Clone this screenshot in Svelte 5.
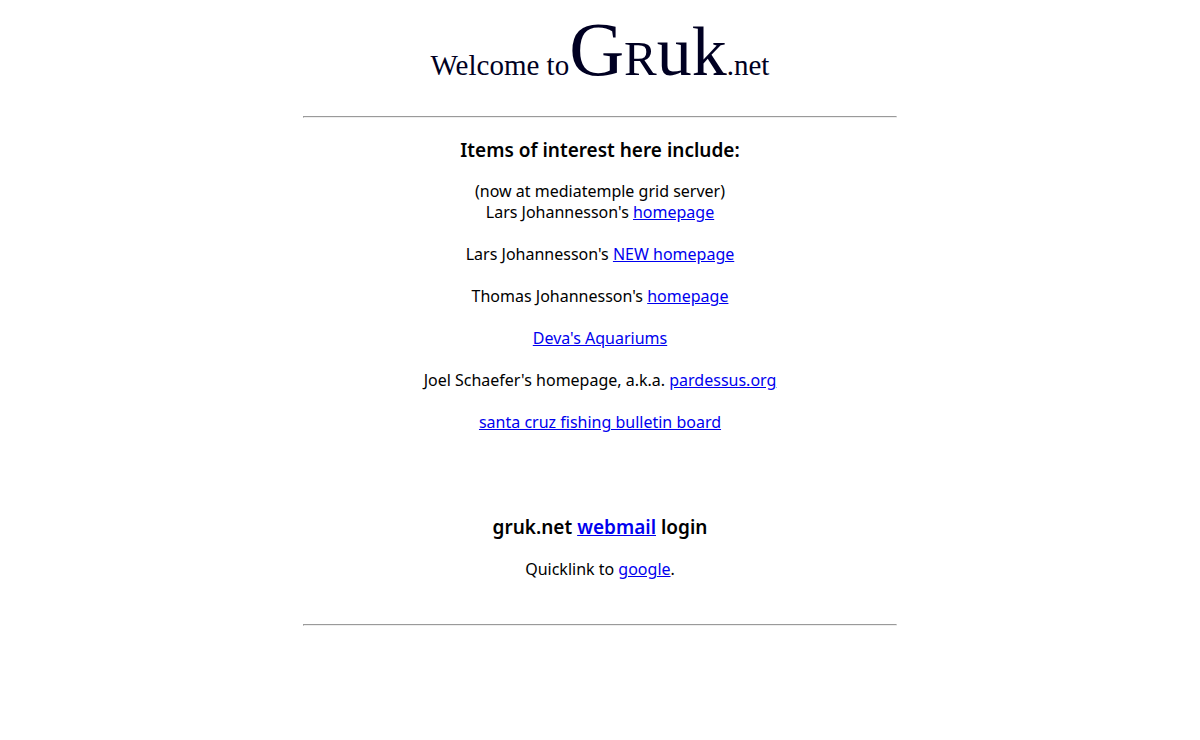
<script lang="ts">
  type Entry = { before?: string; label: string; href: string };

  const entries: Entry[] = [
    { before: "Lars Johannesson's", label: "homepage", href: "#lars" },
    { before: "Lars Johannesson's", label: "NEW homepage", href: "#lars-new" },
    { before: "Thomas Johannesson's", label: "homepage", href: "#thomas" },
    { label: "Deva's Aquariums", href: "#aquariums" },
    { before: "Joel Schaefer's homepage, a.k.a.", label: "pardessus.org", href: "#pardessus" },
    { label: "santa cruz fishing bulletin board", href: "#fishing" },
  ];
</script>

<main class="page">
  <h1 class="banner">
    <span class="small">Welcome to</span><span class="big">G</span><span class="mid"><span class="caps">r</span>uk</span><span class="small">.net</span>
  </h1>
  <hr />
  <h2>Items of interest here include:</h2>
  <p>(now at mediatemple grid server)</p>
  <ul class="links">
    {#each entries as entry (entry.href)}
      <li>{entry.before ? entry.before + " " : ""}<a href={entry.href}>{entry.label}</a></li>
    {/each}
  </ul>
  <h2 class="mail">gruk.net <a href="#webmail">webmail</a> login</h2>
  <p class="quick">Quicklink to <a href="#google">google</a>.</p>
  <hr />
</main>

<style>
  :global(body) {
    background: #fff;
  }

  .page {
    width: calc(50% - 6px);
    min-width: 360px;
    margin: 0 auto;
    padding-top: 16px;
    text-align: center;
    font-family: "Noto Sans", sans-serif;
    font-size: 16px;
    line-height: 21px;
    color: #000;
  }

  .banner {
    display: flex;
    align-items: baseline;
    justify-content: center;
    height: 80px;
    margin: 0 0 20px;
    font-family: "Liberation Serif", serif;
    font-weight: 400;
    line-height: 66px;
    white-space: nowrap;
    color: #000022;
  }

  .small {
    font-size: 29px;
  }

  .big {
    font-size: 76px;
  }

  .mid {
    font-size: 70px;
  }

  .caps {
    font-variant: small-caps;
  }

  hr {
    margin: 0;
  }

  h2 {
    margin: 20px 0 19px;
    font-size: 19px;
    font-weight: 600;
    line-height: 24px;
  }

  p {
    margin: 0;
  }

  .links {
    display: flex;
    flex-direction: column;
    gap: 21px;
    margin: 0 0 82px;
    padding: 0;
    list-style: none;
  }

  .mail {
    margin-bottom: 20px;
  }

  a {
    color: #0000ee;
  }

  .quick {
    margin-bottom: 44px;
  }
</style>
